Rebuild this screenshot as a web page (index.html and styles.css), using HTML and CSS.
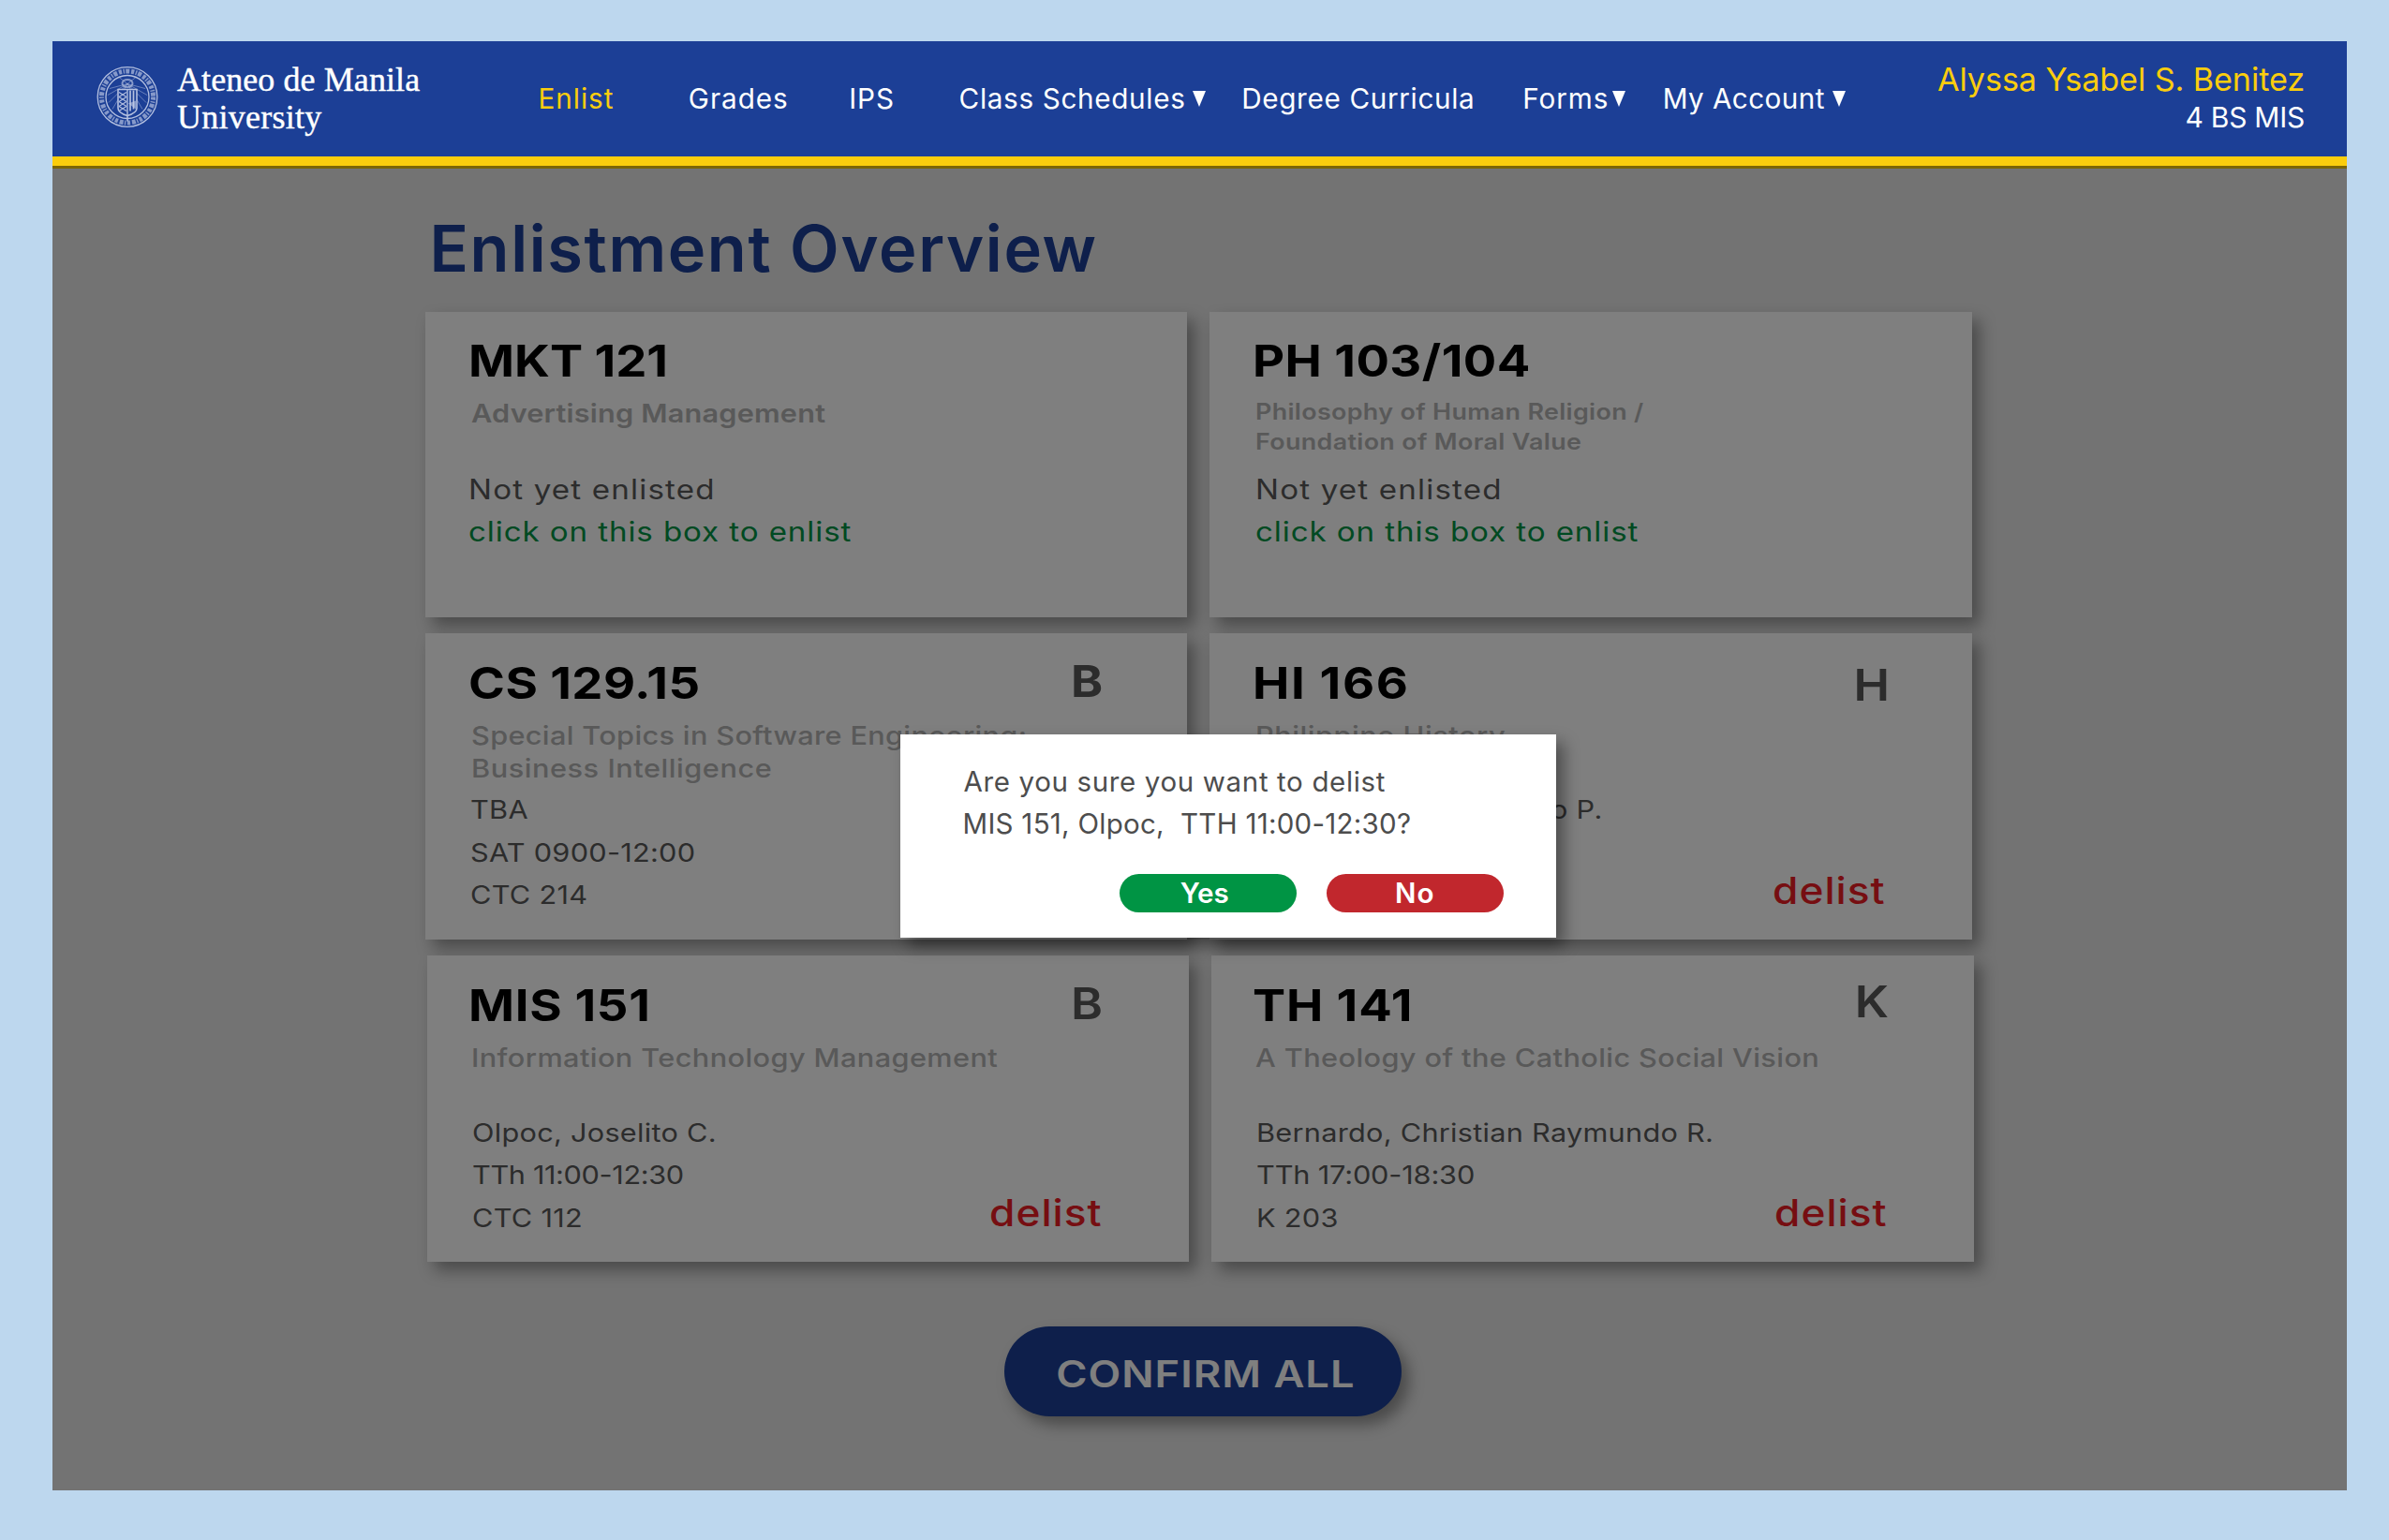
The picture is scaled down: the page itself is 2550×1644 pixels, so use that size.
FILE: index.html
```html
<!DOCTYPE html>
<html lang="en">
<head>
<meta charset="utf-8">
<title>Enlistment Overview</title>
<link rel="stylesheet" href="styles.css">
</head>
<body>
<div class="frame">
  <header class="topbar">
    <div class="brand">
      <svg class="seal" viewBox="0 0 66 66" fill="none" stroke="#b4c0e0">
        <circle cx="33" cy="33" r="31.8" stroke-width="1.3"/>
        <circle cx="33" cy="33" r="27.6" stroke-width="5" stroke-dasharray="3.2 1.6 1.4 1.3 4 1.9" opacity=".7"/>
        <circle cx="33" cy="33" r="23" stroke-width="1.3"/>
        <g stroke-width="1" opacity=".5">
          <path d="M33 19 14 24M33 19 12 31M33 19 13 39M33 19 17 46M33 19 52 24M33 19 54 31M33 19 53 39M33 19 49 46M33 19 24 12M33 19 42 12"/>
        </g>
        <ellipse cx="33" cy="18.500" rx="5.500" ry="4" stroke-width="2" opacity=".7"/>
        <path d="M23 25h20v20q0 5-10 8-10-3-10-8z" fill="#1c3f96" stroke-width="1.6"/>
        <path d="M33 25v28" stroke-width="1.4"/>
        <path d="M24 28l8 5M24 33l8 5M24 38l8 5M24 43l8 5M32 28l-8 5M32 33l-8 5M32 38l-8 5M32 43l-8 5" stroke-width="1.1"/>
        <path d="M36 26v22M39.500 26v20" stroke-width="1.700"/>
        <path d="M34 40l8-3v9z" fill="#c3cde8" opacity=".6" stroke="none"/>
        <path d="M33 53v6" stroke-width="1.500"/>
      </svg>
      <div class="brand-name"><span class="b1">Ateneo de Manila</span><span class="b2">University</span></div>
    </div>
    <nav class="nav">
      <a class="active">Enlist</a>
      <a>Grades</a>
      <a>IPS</a>
      <a class="classes">Class Schedules<svg class="caret" viewBox="0 0 14 17"><path d="M0 0h14L7 17z"/></svg></a>
      <a class="degree">Degree Curricula</a>
      <a class="forms">Forms<svg class="caret" viewBox="0 0 14 17"><path d="M0 0h14L7 17z"/></svg></a>
      <a class="account">My Account<svg class="caret" viewBox="0 0 14 17"><path d="M0 0h14L7 17z"/></svg></a>
    </nav>
    <div class="user"><span class="user-name">Alyssa Ysabel S. Benitez</span><span class="user-course">4 BS MIS</span></div>
  </header>

  <main class="main">
    <h1>Enlistment Overview</h1>
    <div class="cards">
      <section class="card open">
        <div class="info">
          <h2>MKT 121</h2>
          <div class="sub adv"><span>Advertising Management</span></div>
          <div class="body"><span class="nye">Not yet enlisted</span><span class="click">click on this box to enlist</span></div>
        </div>
      </section>
      <section class="card open right">
        <div class="info">
          <h2 class="ph">PH 103/104</h2>
          <div class="sub small"><span>Philosophy of Human Religion /</span><span>Foundation of Moral Value</span></div>
          <div class="body"><span class="nye">Not yet enlisted</span><span class="click">click on this box to enlist</span></div>
        </div>
      </section>
      <section class="card">
        <div class="info">
          <h2 class="cs">CS 129.15</h2>
          <div class="sub"><span class="st">Special Topics in Software Engineering:</span><span class="bi">Business Intelligence</span></div>
          <div class="body"><span>TBA</span><span>SAT 0900-12:00</span><span>CTC 214</span></div>
        </div>
        <div class="side"><b class="grade g-b">B</b></div>
      </section>
      <section class="card right">
        <div class="info">
          <h2 class="hi">HI 166</h2>
          <div class="sub"><span class="bi">Philippine History</span></div>
          <div class="body"><span class="prof">o P.</span></div>
        </div>
        <div class="side"><b class="grade g-h">H</b><a class="delist">delist</a></div>
      </section>
      <section class="card last">
        <div class="info">
          <h2 class="mis">MIS 151</h2>
          <div class="sub"><span>Information Technology Management</span></div>
          <div class="body"><span>Olpoc, Joselito C.</span><span class="t11">TTh 11:00-12:30</span><span>CTC 112</span></div>
        </div>
        <div class="side"><b class="grade g-b2">B</b><a class="delist">delist</a></div>
      </section>
      <section class="card last right">
        <div class="info">
          <h2 class="th">TH 141</h2>
          <div class="sub"><span>A Theology of the Catholic Social Vision</span></div>
          <div class="body"><span>Bernardo, Christian Raymundo R.</span><span class="t17">TTh 17:00-18:30</span><span>K 203</span></div>
        </div>
        <div class="side"><b class="grade g-k">K</b><a class="delist">delist</a></div>
      </section>
    </div>
    <button class="confirm"><span>CONFIRM ALL</span></button>
    <div class="shade"></div>
    <div class="dialog">
      <p class="q1">Are you sure you want to delist</p>
      <p class="q2">MIS 151, Olpoc,&nbsp; TTH 11:00-12:30?</p>
      <div class="actions"><button class="yes">Yes</button><button class="no">No</button></div>
    </div>
  </main>
</div>
</body>
</html>
```
FILE: styles.css
```css
* { box-sizing: border-box; }
body { margin: 0; background: #bdd7ee; font-family: Inter, "Liberation Sans", sans-serif; overflow: hidden; }
.frame { width: 2449.500px; height: 1547.500px; margin: 43.500px 0 0 55.500px; display: flex; flex-direction: column; }
h1, h2, p { margin: 0; }
button { border: 0; padding: 0; font-family: inherit; }
a, span, h1, h2, p, b { white-space: nowrap; }

/* header */
.topbar { height: 133px; background: #1c3f96; border-bottom: 10px solid #fbcd0d; display: flex; align-items: center; color: #fff; flex: none; }
.brand { width: 519px; display: flex; align-items: center; padding-left: 47.500px; }
.seal { width: 66px; height: 67px; margin-top: -4px; }
.brand-name { margin: -1px 0 0 20px; display: flex; flex-direction: column; font: 36px/40px "Liberation Serif", serif; -webkit-text-stroke: .4px #fff; }
.b1 { letter-spacing: .08px; }
.b2 { letter-spacing: .25px; }
.nav { display: grid; grid-template-columns: 160.300px 171.400px 117.400px 301.600px 300px 149.500px 200px; font-size: 29.700px; line-height: 40px; letter-spacing: .95px; }
.nav a { display: flex; align-items: center; }
.active { color: #fbcd0d; }
.classes, .degree { letter-spacing: .66px; }
.account { letter-spacing: .42px; }
.caret { width: 14px; height: 17px; fill: #fff; margin: 1px 0 0 8px; }
.forms .caret { margin-left: 4px; }
.account .caret { margin-left: 8.500px; }
.user { margin-left: auto; padding-right: 45px; display: flex; flex-direction: column; align-items: flex-end; line-height: 40px; }
.user-name { font-size: 34.200px; letter-spacing: -.1px; color: #fbcd0d; }
.user-course { font-size: 30px; letter-spacing: -.25px; }

/* page */
.main { position: relative; flex: 1; border-top: 3px solid #fbcd0d; background: #e6e6e6; padding: 46px 0 0 398px; display: flex; flex-direction: column; }
h1 { font-size: 68.500px; line-height: 80px; font-weight: 600; letter-spacing: 1.640px; color: #1c3f96; margin-left: 5px; }
.cards { display: grid; grid-template-columns: 813.400px 813.400px; column-gap: 24.300px; row-gap: 17.600px; margin-top: 27px; grid-auto-rows: 326.400px; }
.card { background: #fff; box-shadow: 8px 9px 16px rgba(0,0,0,.36); display: flex; justify-content: space-between; padding: 22.800px 0 0 46.300px; --in: 2.500px; }
.card.right { padding-left: 45.500px; --in: 3.500px; }
.card.last { margin: 0 -2px 0 2px; padding-left: 44.500px; --in: 3.500px; }
.card.last.right { padding-left: 44px; }
.info { display: flex; flex-direction: column; align-items: flex-start; width: 560px; flex: none; }
h2, .sub span, .body span { transform: scaleX(1.12); transform-origin: left; }
h2 { font-size: 47px; line-height: 60px; font-weight: 700; color: #000; }
.ph, .cs { letter-spacing: .4px; }
.hi { letter-spacing: 1.500px; }
.mis { letter-spacing: .6px; }
.th { letter-spacing: .8px; }
.sub { margin: 9.200px 0 0 3px; height: 74px; display: flex; flex-direction: column; align-items: flex-start; font-size: 27.400px; line-height: 35px; font-weight: 500; letter-spacing: .360px; color: #b3b3b3; }
.sub.adv, .sub.small { font-weight: 600; letter-spacing: .170px; }
.sub.small { margin-left: 3.500px; font-size: 24px; line-height: 31.400px; letter-spacing: .3px; }
.st { letter-spacing: .3px; }
.bi { letter-spacing: .48px; }
.body { margin-left: var(--in); display: flex; flex-direction: column; align-items: flex-start; font-size: 27.400px; line-height: 45.500px; letter-spacing: .24px; color: #595959; }
.last .body { margin-top: .5px; }
.open .body { margin: 1.500px 0 0 .5px; font-size: 29.600px; }
.open.right .body { margin-left: 3px; }
.nye { letter-spacing: 1.040px; }
.click { letter-spacing: .79px; color: #009444; }
.t11 { letter-spacing: -.330px; }
.t17 { letter-spacing: -.140px; }
.prof { margin-left: 315px; }
.side { display: flex; flex-direction: column; justify-content: space-between; align-items: flex-end; padding: 0 92px 22px 0; }
.grade { font-size: 47px; line-height: 60px; font-weight: 600; color: #595959; transform: scaleX(1.1); transform-origin: right; }
.g-b { margin: -2px -2.500px 0 0; font-weight: 700; }
.g-h { margin: 2px -4px 0 0; }
.g-b2 { margin: -2px 0 0; }
.g-k { margin: -4px -1px 0 0; }
.delist { font-size: 39.500px; line-height: 60px; font-weight: 500; letter-spacing: .9px; color: #ed1c24; transform: scaleX(1.12); transform-origin: right; }
.confirm { width: 424px; height: 95.400px; border-radius: 48px; margin: 69.300px 0 0 618.500px; background: #1c3f96; color: #fff; box-shadow: 8px 9px 16px rgba(0,0,0,.36); display: flex; align-items: center; justify-content: center; padding: 6px 0 0 6px; }
.confirm span { font-size: 39.300px; font-weight: 600; letter-spacing: .9px; transform: scaleX(1.15); }

/* dimmed layer and dialog over the page */
.shade { position: absolute; inset: -3px 0 0; background: rgba(0,0,0,.5); }
.dialog { position: absolute; left: 905px; top: 604.200px; width: 700.300px; height: 217.600px; background: #fff; box-shadow: 8px 9px 16px rgba(0,0,0,.4); padding: 28.500px 56.300px 0 68px; color: #4d4d4d; font-size: 29.500px; line-height: 45px; }
.q1 { letter-spacing: .64px; }
.q2 { letter-spacing: .27px; margin-left: -1px; }
.actions { display: flex; justify-content: flex-end; gap: 32.500px; margin-top: 30.500px; }
.actions button { width: 188.500px; height: 41.500px; border-radius: 21px; color: #fff; font-size: 29.600px; line-height: 40px; font-weight: 600; }
.yes { background: #009444; padding-right: 7px; }
.no { background: #c1272d; letter-spacing: 1px; }
```
